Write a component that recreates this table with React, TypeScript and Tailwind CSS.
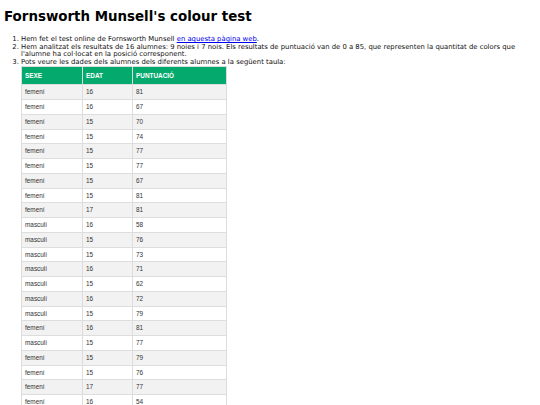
import React from "react";

const rows: [string, string, string][] = [
  ["femení", "16", "81"],
  ["femení", "16", "67"],
  ["femení", "15", "70"],
  ["femení", "15", "74"],
  ["femení", "15", "77"],
  ["femení", "15", "77"],
  ["femení", "15", "67"],
  ["femení", "15", "81"],
  ["femení", "17", "81"],
  ["masculí", "16", "58"],
  ["masculí", "15", "76"],
  ["masculí", "15", "73"],
  ["masculí", "16", "71"],
  ["masculí", "15", "62"],
  ["masculí", "16", "72"],
  ["masculí", "15", "79"],
  ["femení", "16", "81"],
  ["masculí", "15", "77"],
  ["femení", "15", "79"],
  ["femení", "15", "76"],
  ["femení", "17", "77"],
  ["femení", "16", "54"],
];

export default function App() {
  return (
    <div className="w-[540px] h-[405px] overflow-hidden bg-white px-[4px] text-black [font-family:'DejaVu_Sans',Verdana,sans-serif]">
      <h1 className="pt-[9px] text-[13.4px] leading-[16px] font-bold">
        Fornsworth Munsell's colour test
      </h1>
      <ol className="mt-[11px] list-decimal pl-[17px] pr-[5px] text-[6.85px] leading-[7.6px] text-[#111]">
        <li>
          Hem fet el test online de Fornsworth Munsell{" "}
          <a href="#" className="text-[#0000ee] underline">
            en aquesta pàgina web
          </a>
          .
        </li>
        <li>
          Hem analitzat els resultats de 16 alumnes: 9 noies i 7 nois. Els resultats de puntuació van de 0 a 85, que
          representen la quantitat de colors que l'alumne ha col·locat en la posició corresponent.
        </li>
        <li>
          Pots veure les dades dels alumnes dels diferents alumnes a la següent taula:
          <table className="w-[206px] border-collapse text-[6.4px] [font-family:'Liberation_Sans',Arial,sans-serif]">
            <thead>
              <tr className="bg-[#04AA6D] text-white">
                <th className="w-[61px] h-[18px] border border-[#ddd] px-[3px] text-left font-bold">SEXE</th>
                <th className="w-[50px] h-[18px] border border-[#ddd] px-[3px] text-left font-bold">EDAT</th>
                <th className="h-[18px] border border-[#ddd] px-[3px] text-left font-bold">PUNTUACIÓ</th>
              </tr>
            </thead>
            <tbody>
              {rows.map((r, i) => (
                <tr key={i} className={i % 2 === 0 ? "bg-[#f2f2f2]" : "bg-white"}>
                  <td className="h-[14.76px] border border-[#ddd] px-[3px] text-[#333]">{r[0]}</td>
                  <td className="h-[14.76px] border border-[#ddd] px-[3px] text-[#333]">{r[1]}</td>
                  <td className="h-[14.76px] border border-[#ddd] px-[3px] text-[#333]">{r[2]}</td>
                </tr>
              ))}
            </tbody>
          </table>
        </li>
      </ol>
    </div>
  );
}
